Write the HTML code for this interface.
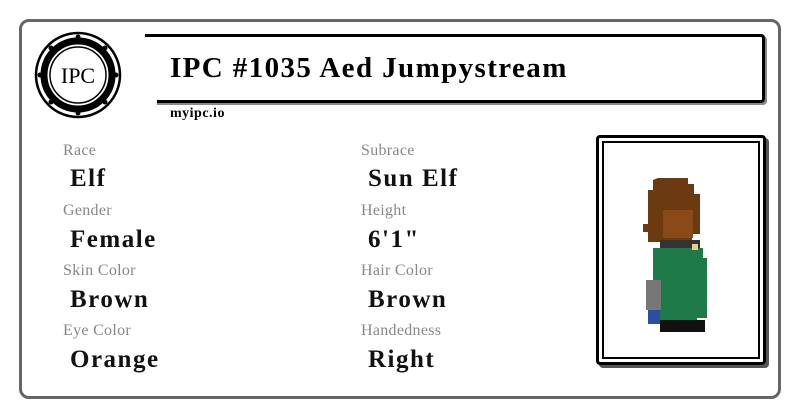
<!DOCTYPE html>
<html><head><style>
body{margin:0;width:800px;height:418px;background:#fff;position:relative;overflow:hidden;font-family:"Liberation Serif",serif}
.card{position:absolute;left:19px;top:19px;width:756px;height:374px;border:3px solid #666;border-radius:10px}
.tbox{position:absolute;left:145px;top:34px;width:617px;height:63px;border:3px solid #000;border-left:none;border-radius:0 4px 4px 0;box-shadow:2px 2px 0 #888}
.tbox:after{content:"";position:absolute;left:-3px;bottom:-5px;width:15px;height:6px;background:#fff}
.t{position:absolute;left:170px;top:52px;font-size:29px;font-weight:bold;letter-spacing:1.4px}
.url{position:absolute;left:170px;top:106px;font-size:14px;font-weight:bold;letter-spacing:0.5px}
.l{position:absolute;font-size:16px;color:#888;letter-spacing:0.3px}
.v{position:absolute;font-size:25px;font-weight:bold;color:#111;letter-spacing:1.5px}
.frame{position:absolute;left:596px;top:135px;width:164px;height:224px;border:3px solid #000;border-radius:4px;box-shadow:3px 3px 0 #555}
.frame:after{content:"";position:absolute;left:3px;top:3px;right:3px;bottom:3px;border:2px solid #000}
</style></head><body>
<div class="card"></div>
<svg style="position:absolute;left:33px;top:30px" width="90" height="90" viewBox="0 0 90 90">
<circle cx="45" cy="45" r="42" fill="#fff" stroke="#000" stroke-width="2.5"/>
<circle cx="45" cy="45" r="34" fill="none" stroke="#000" stroke-width="7"/>
<circle cx="45" cy="45" r="28" fill="#fff" stroke="#000" stroke-width="1.5"/>
<g fill="#000"><circle cx="45" cy="7" r="2.5"/><circle cx="45" cy="83" r="2.5"/><circle cx="7" cy="45" r="2.5"/><circle cx="83" cy="45" r="2.5"/><circle cx="18" cy="18" r="2.5"/><circle cx="72" cy="18" r="2.5"/><circle cx="18" cy="72" r="2.5"/><circle cx="72" cy="72" r="2.5"/></g>
<text x="45" y="53" text-anchor="middle" font-family="Liberation Serif" font-size="22" fill="#000">IPC</text>
</svg>
<div class="tbox"></div>
<div class="t">IPC #1035 Aed Jumpystream</div>
<div class="url">myipc.io</div>
<div class="l" style="left:63px;top:142px">Race</div><div class="v" style="left:70px;top:165px">Elf</div>
<div class="l" style="left:63px;top:202px">Gender</div><div class="v" style="left:70px;top:226px">Female</div>
<div class="l" style="left:63px;top:262px">Skin Color</div><div class="v" style="left:70px;top:286px">Brown</div>
<div class="l" style="left:63px;top:322px">Eye Color</div><div class="v" style="left:70px;top:346px">Orange</div>
<div class="l" style="left:361px;top:142px">Subrace</div><div class="v" style="left:368px;top:165px">Sun Elf</div>
<div class="l" style="left:361px;top:202px">Height</div><div class="v" style="left:368px;top:226px">6'1"</div>
<div class="l" style="left:361px;top:262px">Hair Color</div><div class="v" style="left:368px;top:286px">Brown</div>
<div class="l" style="left:361px;top:322px">Handedness</div><div class="v" style="left:368px;top:346px">Right</div>
<div class="frame"></div>
<svg style="position:absolute;left:638px;top:170px" width="80" height="175" viewBox="0 0 80 175">
<path d="M20 8h30v6h6v10h6v40h-8v8H10v-10H5v-8h5V20h5V10z" fill="#6b3a10"/>
<path d="M25 40h30v28H25z" fill="#8a4a18"/>
<path d="M22 70h40v8H22z" fill="#333"/>
<path d="M15 78h50v10h4v60h-10v8H22v-20H15z" fill="#1f7a4a"/>
<path d="M8 110h15v30H8z" fill="#777"/>
<path d="M10 140h12v14H10z" fill="#2a4fa0"/>
<path d="M22 150h45v12H22z" fill="#111"/>
<path d="M54 74h6v6h-6z" fill="#e8d080"/>
</svg>
</body></html>
